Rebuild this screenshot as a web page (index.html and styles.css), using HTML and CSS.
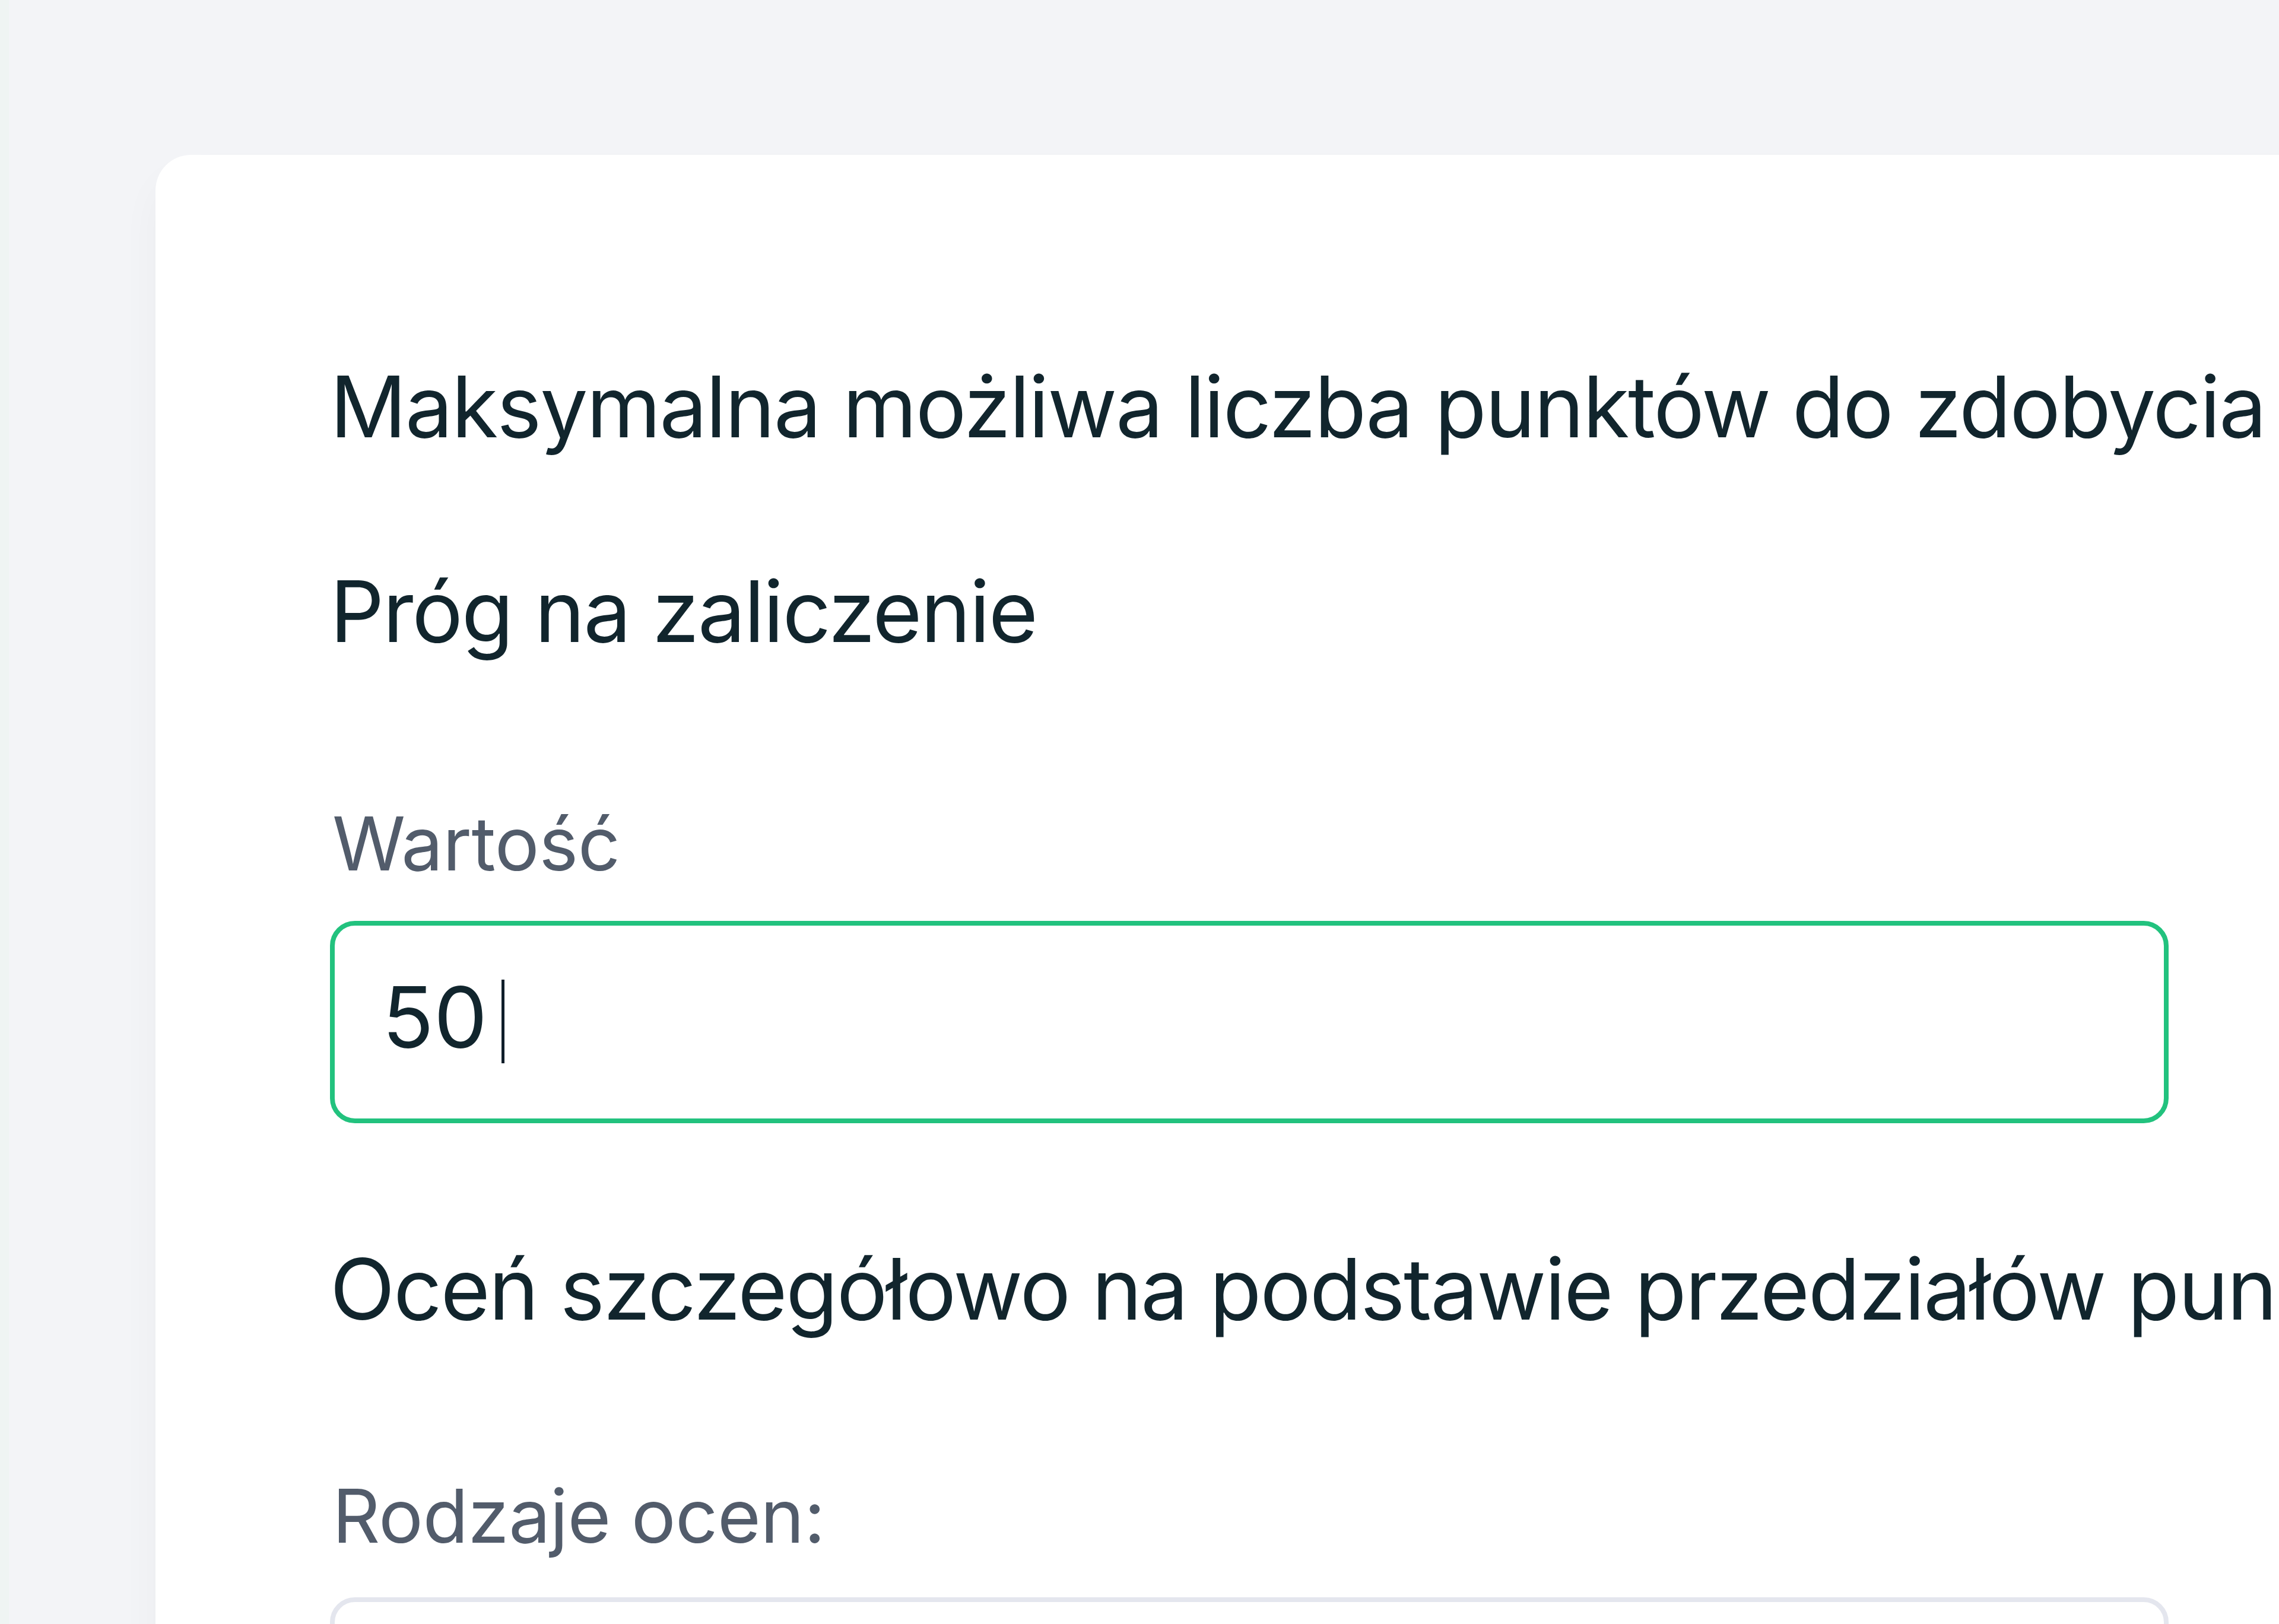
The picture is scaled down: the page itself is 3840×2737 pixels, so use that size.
FILE: index.html
```html
<!DOCTYPE html>
<html lang="pl">
<head>
<meta charset="utf-8">
<title>Próg na zaliczenie</title>
<link rel="stylesheet" href="styles.css">
</head>
<body>
<div class="page">
  <div class="edge"></div>
  <main class="main">
    <section class="card">
      <h2 class="title title-max">Maksymalna możliwa liczba punktów do zdobycia (100)</h2>
      <h2 class="title title-threshold">Próg na zaliczenie</h2>
      <label class="label label-value">Wartość</label>
      <div class="input is-focused">
        <span class="input-text">50</span><span class="caret"></span>
      </div>
      <h2 class="title title-detail">Oceń szczegółowo na podstawie przedziałów punktowych</h2>
      <label class="label label-grades">Rodzaje ocen:</label>
      <div class="grades-box"></div>
    </section>
  </main>
</div>
</body>
</html>
```

FILE: styles.css
```css
html, body {
  margin: 0;
  padding: 0;
}

body {
  background: #f3f4f7;
  overflow: hidden;
  width: 3840px;
  height: 2737px;
  font-family: "Inter", "Noto Sans", sans-serif;
}

.page {
  display: flex;
  height: 2737px;
}

.edge {
  width: 15px;
  flex: 0 0 15px;
  background: #eff4f3;
}

.main {
  flex: 0 0 auto;
  padding-top: 261px;
  padding-left: 247px;
}

.card {
  width: 3900px;
  min-height: 2600px;
  background: #ffffff;
  border-top-left-radius: 60px;
  box-shadow: 0 40px 70px rgba(30, 40, 60, 0.035);
  padding: 324px 0 0 294px;
  box-sizing: border-box;
  display: flex;
  flex-direction: column;
  align-items: flex-start;
}

.card > * {
  flex-shrink: 0;
}

.title {
  margin: 0;
  font-size: 143px;
  line-height: 200px;
  font-weight: 400;
  color: #11252d;
  white-space: nowrap;
  letter-spacing: -2.3px;
}

.title-threshold {
  margin-top: 145px;
}

.label {
  display: block;
  font-size: 125px;
  line-height: 175px;
  color: #525c6b;
  white-space: nowrap;
  letter-spacing: -0.5px;
}

.label-value {
  margin-top: 204px;
  padding-left: 4px;
}

.input {
  margin-top: 43px;
  width: 3098px;
  height: 341px;
  box-sizing: border-box;
  border: 8px solid #22c27e;
  border-radius: 42px;
  padding: 54px 0 0 80px;
  display: flex;
  align-items: flex-start;
  background: #ffffff;
}

.input-text {
  font-size: 143px;
  line-height: 200px;
  color: #11252d;
}

.caret {
  display: block;
  width: 5px;
  height: 141px;
  background: #0f1e2a;
  margin-left: 24px;
  margin-top: 37px;
}

.title-detail {
  margin-top: 179px;
}

.label-grades {
  margin-top: 195px;
  padding-left: 4px;
}

.grades-box {
  margin-top: 50px;
  width: 3098px;
  height: 340px;
  box-sizing: border-box;
  border: 8px solid #e4e6ee;
  border-radius: 42px;
}
```
